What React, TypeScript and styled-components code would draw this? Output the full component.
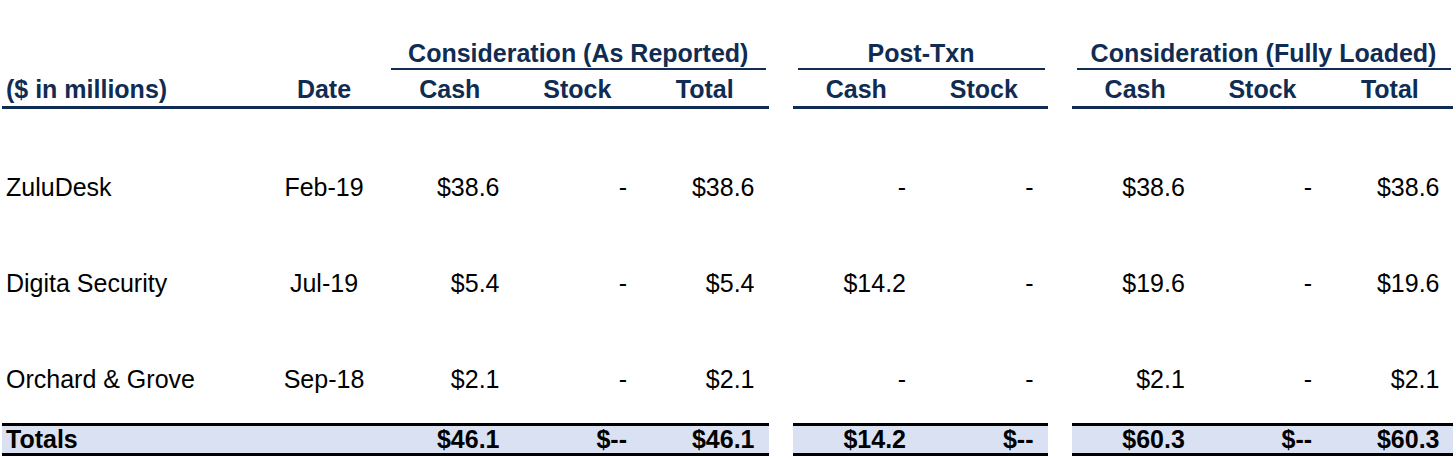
import React from 'react';
import styled, { createGlobalStyle, css } from 'styled-components';

const NAVY = '#102C52';

const GlobalStyle = createGlobalStyle`
  html, body { margin: 0; padding: 0; background: #fff; }
  body { font-family: "Liberation Sans", Arial, sans-serif; }
`;

const COLS_A = '260px 124px 127.5px 127.5px 127.5px';
const COLS_B = '127.5px 127.5px';
const COLS_C = '127.33px 127.33px 127.34px';

const Sheet = styled.div`
  width: 1456px;
  height: 458px;
  box-sizing: border-box;
  padding: 41px 0 0 2px;
  font-family: "Liberation Sans", Arial, sans-serif;
  font-size: 25px;
  line-height: 25px;
  color: #000;
  overflow: hidden;
`;

const Band = styled.div`
  display: flex;
  gap: 24px;
`;

type Rule = 'none' | 'header' | 'total';

const Segment = styled.div<{ $cols: string; $rule?: Rule; $row?: boolean }>`
  display: grid;
  grid-template-columns: ${p => p.$cols};
  align-items: center;
  box-sizing: border-box;
  ${p =>
    p.$rule === 'header' &&
    css`
      padding: 7px 0 4px;
      border-bottom: 3px solid ${NAVY};
    `}
  ${p =>
    p.$rule === 'total' &&
    css`
      padding: 1px 0 1px;
      border-top: 3px solid #000;
      border-bottom: 3px solid #000;
      background: #d9e1f2;
    `}
  ${p =>
    p.$row &&
    css`
      height: 96px;
      padding-top: 8px;
    `}
`;

const GroupTitle = styled.div`
  margin: 0 3px 0 5px;
  padding-bottom: 2px;
  border-bottom: 2px solid ${NAVY};
  text-align: center;
  font-weight: 700;
  color: ${NAVY};
  white-space: nowrap;
`;

const Blank = styled.div``;

type Align = 'left' | 'center' | 'right';

const Cell = styled.div<{ $align: Align; $head?: boolean; $bold?: boolean }>`
  text-align: ${p => p.$align};
  padding-left: ${p => (p.$align === 'left' ? 4 : 0)}px;
  padding-right: ${p => (p.$align === 'right' ? 14 : 0)}px;
  font-weight: ${p => (p.$head || p.$bold ? 700 : 400)};
  color: ${p => (p.$head ? NAVY : '#000')};
  white-space: nowrap;
`;

const Body = styled.div`
  padding-top: 26px;
`;

type Row = {
  name: string;
  date: string;
  a: string[];
  b: string[];
  c: string[];
};

const rows: Row[] = [
  { name: 'ZuluDesk', date: 'Feb-19', a: ['$38.6', '-', '$38.6'], b: ['-', '-'], c: ['$38.6', '-', '$38.6'] },
  { name: 'Digita Security', date: 'Jul-19', a: ['$5.4', '-', '$5.4'], b: ['$14.2', '-'], c: ['$19.6', '-', '$19.6'] },
  { name: 'Orchard & Grove', date: 'Sep-18', a: ['$2.1', '-', '$2.1'], b: ['-', '-'], c: ['$2.1', '-', '$2.1'] },
];

const totals = {
  a: ['$46.1', '$--', '$46.1'],
  b: ['$14.2', '$--'],
  c: ['$60.3', '$--', '$60.3'],
};

const Values: React.FC<{ values: string[]; bold?: boolean }> = ({ values, bold }) => (
  <>
    {values.map((v, i) => (
      <Cell key={i} $align="right" $bold={bold}>
        {v}
      </Cell>
    ))}
  </>
);

const HeadCols: React.FC<{ labels: string[] }> = ({ labels }) => (
  <>
    {labels.map(l => (
      <Cell key={l} $align="center" $head>
        {l}
      </Cell>
    ))}
  </>
);

export default function App() {
  return (
    <>
      <GlobalStyle />
      <Sheet>
        <Band>
          <Segment $cols="384px 382.5px">
            <Blank />
            <GroupTitle>Consideration (As Reported)</GroupTitle>
          </Segment>
          <Segment $cols="255px">
            <GroupTitle>Post-Txn</GroupTitle>
          </Segment>
          <Segment $cols="382px">
            <GroupTitle>Consideration (Fully Loaded)</GroupTitle>
          </Segment>
        </Band>

        <Band>
          <Segment $cols={COLS_A} $rule="header">
            <Cell $align="left" $head>($ in millions)</Cell>
            <Cell $align="center" $head>Date</Cell>
            <HeadCols labels={['Cash', 'Stock', 'Total']} />
          </Segment>
          <Segment $cols={COLS_B} $rule="header">
            <HeadCols labels={['Cash', 'Stock']} />
          </Segment>
          <Segment $cols={COLS_C} $rule="header">
            <HeadCols labels={['Cash', 'Stock', 'Total']} />
          </Segment>
        </Band>

        <Body>
          {rows.map(r => (
            <Band key={r.name}>
              <Segment $cols={COLS_A} $row>
                <Cell $align="left">{r.name}</Cell>
                <Cell $align="center">{r.date}</Cell>
                <Values values={r.a} />
              </Segment>
              <Segment $cols={COLS_B} $row>
                <Values values={r.b} />
              </Segment>
              <Segment $cols={COLS_C} $row>
                <Values values={r.c} />
              </Segment>
            </Band>
          ))}
        </Body>

        <Band>
          <Segment $cols={COLS_A} $rule="total">
            <Cell $align="left" $bold>Totals</Cell>
            <Blank />
            <Values values={totals.a} bold />
          </Segment>
          <Segment $cols={COLS_B} $rule="total">
            <Values values={totals.b} bold />
          </Segment>
          <Segment $cols={COLS_C} $rule="total">
            <Values values={totals.c} bold />
          </Segment>
        </Band>
      </Sheet>
    </>
  );
}
